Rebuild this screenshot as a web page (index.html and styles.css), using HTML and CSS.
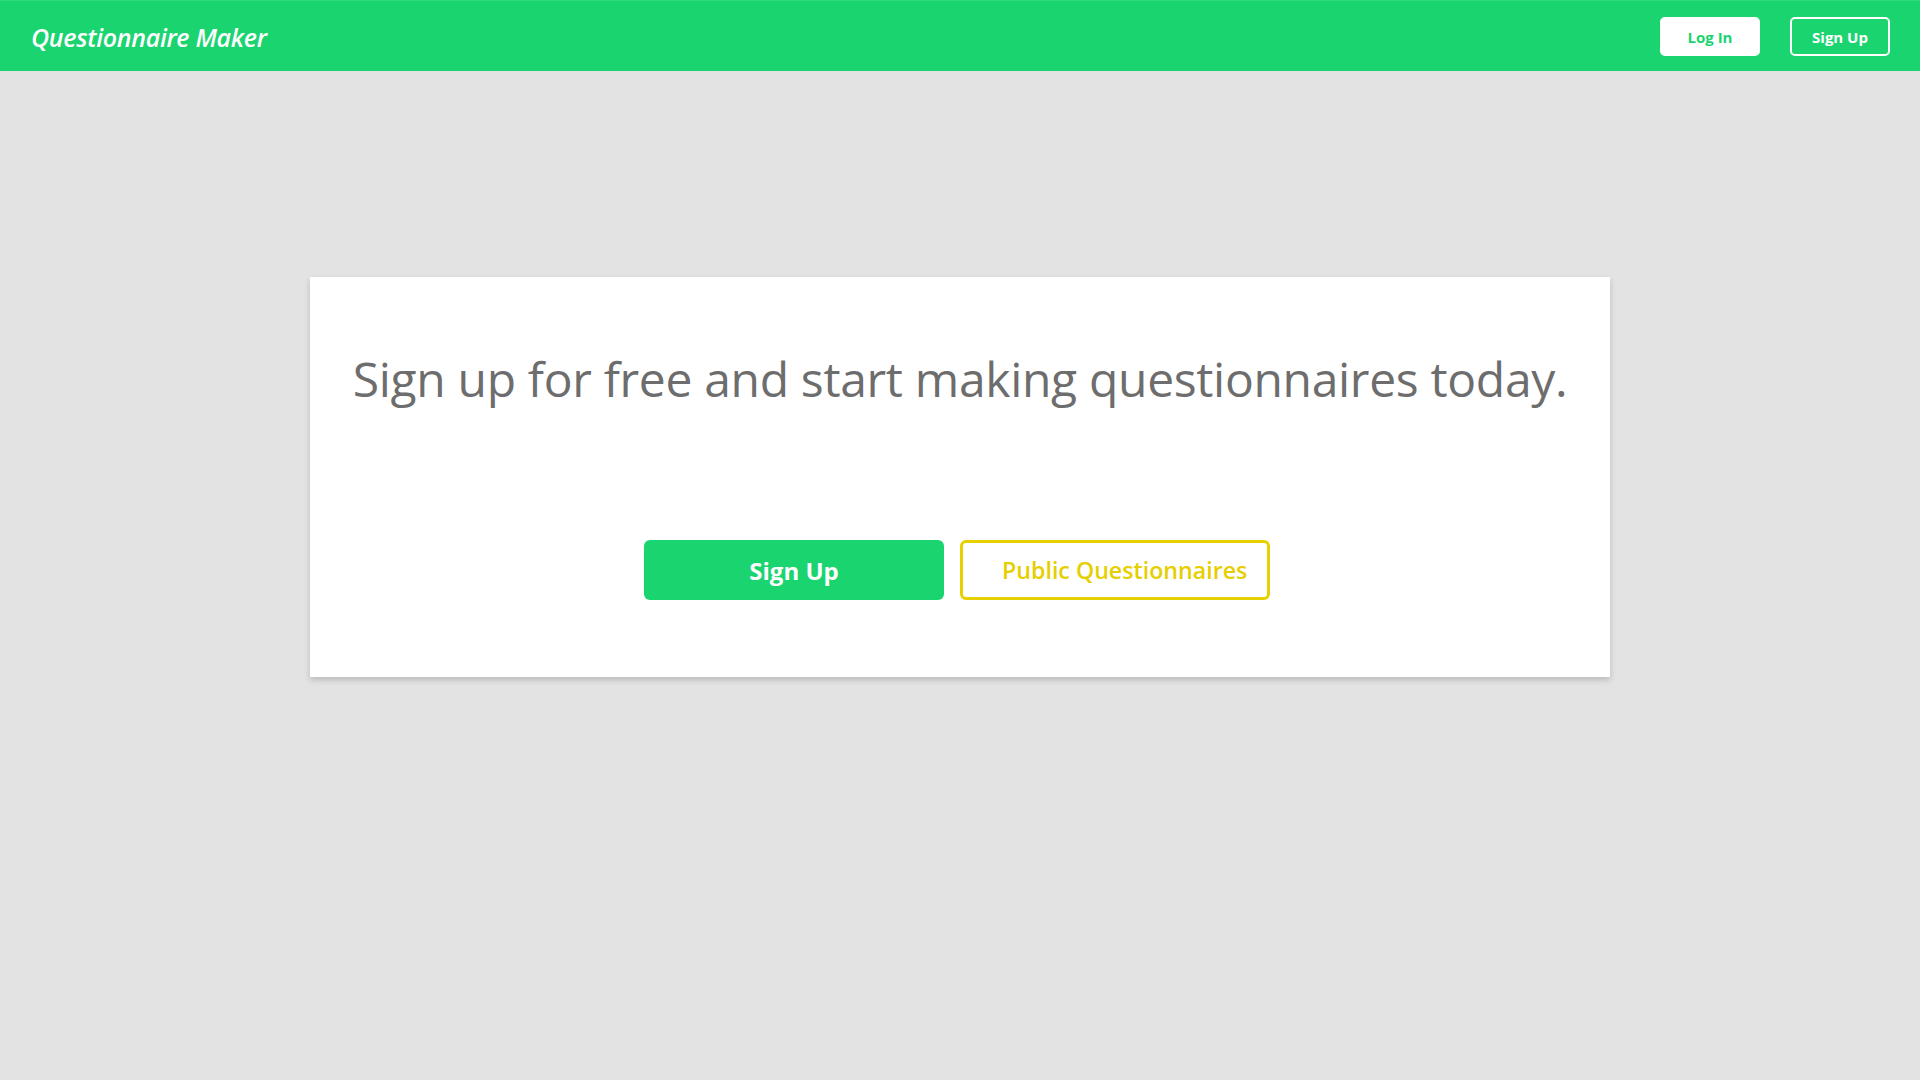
FILE: index.html
```html
<!DOCTYPE html>
<html lang="en">
<head>
<meta charset="utf-8">
<title>Questionnaire Maker</title>
<link rel="stylesheet" href="styles.css">
</head>
<body>
<header class="topbar">
  <div class="brand">Questionnaire Maker</div>
  <nav class="nav">
    <a class="nav-btn nav-login" href="#">Log In</a>
    <a class="nav-btn nav-signup" href="#">Sign Up</a>
  </nav>
</header>
<main class="main">
  <section class="card">
    <h1 class="headline">Sign up for free and start making questionnaires today.</h1>
    <div class="actions">
      <a class="btn btn-primary" href="#">Sign Up</a>
      <a class="btn btn-outline" href="#">Public Questionnaires</a>
    </div>
  </section>
</main>
</body>
</html>
```
FILE: styles.css
```css
html, body {
  margin: 0;
  padding: 0;
}
body {
  background: #e3e3e3;
  font-family: "Open Sans", "Noto Sans", sans-serif;
  min-height: 1080px;
}
a { text-decoration: none; }

.topbar {
  height: 71px;
  box-sizing: border-box;
  border-top: 1px solid #2fd97c;
  background: #1ad46f;
  display: flex;
  align-items: center;
  justify-content: space-between;
  padding: 0 30px 0 31px;
}
.brand {
  color: #fff;
  font-size: 25px;
  font-style: italic;
  font-weight: 600;
  letter-spacing: -0.3px;
  margin-top: 2px;
}
.nav {
  display: flex;
  gap: 30px;
  margin-top: 1px;
}
.nav-btn {
  box-sizing: border-box;
  width: 100px;
  height: 39px;
  border-radius: 5px;
  display: flex;
  align-items: center;
  justify-content: center;
  font-size: 15px;
  font-weight: 700;
}
.nav-login {
  background: #fff;
  color: #1ad46f;
}
.nav-signup {
  border: 2px solid #fff;
  color: #fff;
}

.main {
  padding-top: 206px;
  display: flex;
  justify-content: center;
}
.card {
  width: 1300px;
  height: 400px;
  box-sizing: border-box;
  background: #fff;
  box-shadow: 0 3px 6px rgba(0, 0, 0, 0.18);
  padding-top: 64px;
}
.headline {
  margin: 0;
  text-align: center;
  color: #6d6d6d;
  font-weight: 400;
  font-size: 48px;
  line-height: 76px;
  letter-spacing: -0.32px;
}
.actions {
  margin-top: 123px;
  padding-right: 6px;
  display: flex;
  justify-content: center;
  gap: 16px;
}
.btn {
  box-sizing: border-box;
  height: 60px;
  border-radius: 6px;
  display: flex;
  align-items: center;
  font-size: 24px;
}
.btn-primary {
  width: 300px;
  justify-content: center;
  background: #1ad46f;
  color: #fff;
  font-weight: 700;
}
.btn-outline {
  width: 310px;
  border: 3px solid #e6d000;
  color: #e6cf00;
  font-weight: 600;
  font-size: 23.2px;
  padding-left: 39px;
}
```
